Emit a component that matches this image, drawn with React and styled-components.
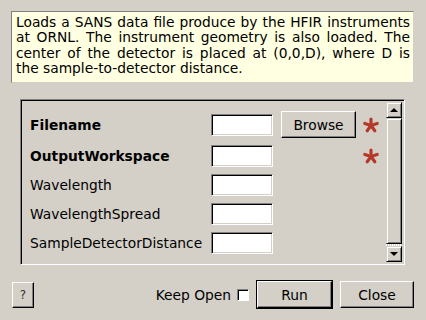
import styled, { createGlobalStyle } from "styled-components";

const GlobalStyle = createGlobalStyle`
  * { box-sizing: border-box; }
  body {
    margin: 0;
    background: #d4d0c8;
    font-family: "DejaVu Sans", "Liberation Sans", sans-serif;
    font-size: 13.8px;
    color: #000;
  }
`;

const description = [
  "Loads a SANS data file produce by the HFIR instruments",
  "at ORNL. The instrument geometry is also loaded. The",
  "center of the detector is placed at (0,0,D), where D is",
  "the sample-to-detector distance.",
];

const fields = [
  { name: "Filename", required: true, browse: true },
  { name: "OutputWorkspace", required: true },
  { name: "Wavelength" },
  { name: "WavelengthSpread" },
  { name: "SampleDetectorDistance" },
];

function Asterisk() {
  const arms = [-90, -18, 54, 126, 198];
  return (
    <svg width="18" height="18" viewBox="0 0 18 18">
      {arms.map((a) => {
        const r = (a * Math.PI) / 180;
        return (
          <line
            key={a}
            x1="9"
            y1="9.5"
            x2={9 + Math.cos(r) * 6.5}
            y2={9.5 + Math.sin(r) * 6.5}
            stroke="#b5392b"
            strokeWidth="3.2"
            strokeLinecap="round"
          />
        );
      })}
    </svg>
  );
}

export default function App() {
  return (
    <Dialog>
      <GlobalStyle />
      <Description>
        {description.map((line, i) => (
          <Line key={i} $last={i === description.length - 1}>
            {line}
          </Line>
        ))}
      </Description>

      <Frame>
        <Properties>
          {fields.map((f) => (
            <Row key={f.name}>
              <Label $bold={f.required}>{f.name}</Label>
              <Input />
              {f.browse ? <Button $w={75}>Browse</Button> : <span />}
              <Mark>{f.required && <Asterisk />}</Mark>
            </Row>
          ))}
        </Properties>
        <ScrollBar>
          <ArrowButton>
            <Arrow $up />
          </ArrowButton>
          <Thumb />
          <ArrowButton>
            <Arrow />
          </ArrowButton>
        </ScrollBar>
      </Frame>

      <Footer>
        <Button $w={22} $h={26} $small>?</Button>
        <Spacer />
        <KeepOpen>
          Keep Open <CheckBox />
        </KeepOpen>
        <Button $w={75} $default>Run</Button>
        <Button $w={74}>Close</Button>
      </Footer>
    </Dialog>
  );
}

const Dialog = styled.div`
  width: 426px;
  height: 320px;
  padding: 11px 12px 0 11px;
  display: flex;
  flex-direction: column;
`;

const Description = styled.div`
  width: 403px;
  height: 72px;
  background: #ffffe1;
  border: 1px solid;
  border-color: #808080 #d4d0c8 #d4d0c8 #808080;
  padding: 3px 3px 0 4px;
  line-height: 15.3px;
`;

const Line = styled.div`
  white-space: nowrap;
  text-align: ${(p) => (p.$last ? "left" : "justify")};
  text-align-last: ${(p) => (p.$last ? "left" : "justify")};
`;

const Frame = styled.div`
  margin: 16px 0 0 9px;
  width: 385px;
  height: 166px;
  display: flex;
  border: 1px solid;
  border-color: #808080 #fff #fff #808080;
  box-shadow: inset 1px 1px #000, inset -1px -1px #d4d0c8;
  padding: 2px 2px 2px 1px;
`;

const Properties = styled.div`
  flex: 1;
  padding: 9px 0 0 8px;
  display: grid;
  grid-template-columns: 173px 62px 75px 18px;
  grid-auto-rows: min-content;
  column-gap: 8px;
  row-gap: 7px;
  align-content: start;
`;

const Row = styled.div`
  display: contents;
  & > * {
    align-self: center;
  }
`;

const Label = styled.span`
  font-weight: ${(p) => (p.$bold ? "bold" : "normal")};
  white-space: nowrap;
`;

const Input = styled.div`
  height: 22px;
  background: #fff;
  border: 1px solid;
  border-color: #808080 #fff #fff #808080;
  box-shadow: inset 1px 1px #000, inset -1px -1px #d4d0c8;
`;

const Mark = styled.span`
  display: flex;
  height: 18px;
  margin-left: -2px;
`;

const Button = styled.div`
  width: ${(p) => p.$w}px;
  height: ${(p) => p.$h || 27}px;
  display: flex;
  align-items: center;
  justify-content: center;
  background: #d4d0c8;
  border: 1px solid;
  border-color: #fff #000 #000 #fff;
  box-shadow: inset -1px -1px #808080;
  font-size: ${(p) => (p.$small ? "12px" : "13.8px")};
  color: ${(p) => (p.$small ? "#333" : "#000")};
  outline: ${(p) => (p.$default ? "1px solid #000" : "none")};
  margin: ${(p) => (p.$default ? "0 1px" : "0")};
`;

const ScrollBar = styled.div`
  width: 16px;
  display: flex;
  flex-direction: column;
  background: repeating-linear-gradient(90deg, #fff 0 1px, #d4d0c8 1px 2px);
`;

const ArrowButton = styled.div`
  height: 16px;
  display: flex;
  align-items: center;
  justify-content: center;
  background: #d4d0c8;
  border: 1px solid;
  border-color: #d4d0c8 #000 #000 #d4d0c8;
  box-shadow: inset 1px 1px #fff, inset -1px -1px #808080;
`;

const Arrow = styled.span`
  width: 0;
  height: 0;
  border-left: 4px solid transparent;
  border-right: 4px solid transparent;
  ${(p) =>
    p.$up
      ? "border-bottom: 4px solid #000;"
      : "border-top: 4px solid #000;"}
`;

const Thumb = styled.div`
  height: 128px;
  margin-bottom: 2px;
  background: #d4d0c8;
  border: 1px solid;
  border-color: #d4d0c8 #000 #000 #d4d0c8;
  box-shadow: inset 1px 1px #fff, inset -1px -1px #808080;
`;

const Footer = styled.div`
  margin-top: 16px;
  padding-left: 1px;
  display: flex;
  align-items: center;
  gap: 7px;
`;

const Spacer = styled.div`
  flex: 1;
`;

const KeepOpen = styled.label`
  display: flex;
  align-items: center;
  gap: 6px;
`;

const CheckBox = styled.span`
  width: 12px;
  height: 12px;
  background: #fff;
  border: 1px solid;
  border-color: #808080 #fff #fff #808080;
  box-shadow: inset 1px 1px #000;
`;
